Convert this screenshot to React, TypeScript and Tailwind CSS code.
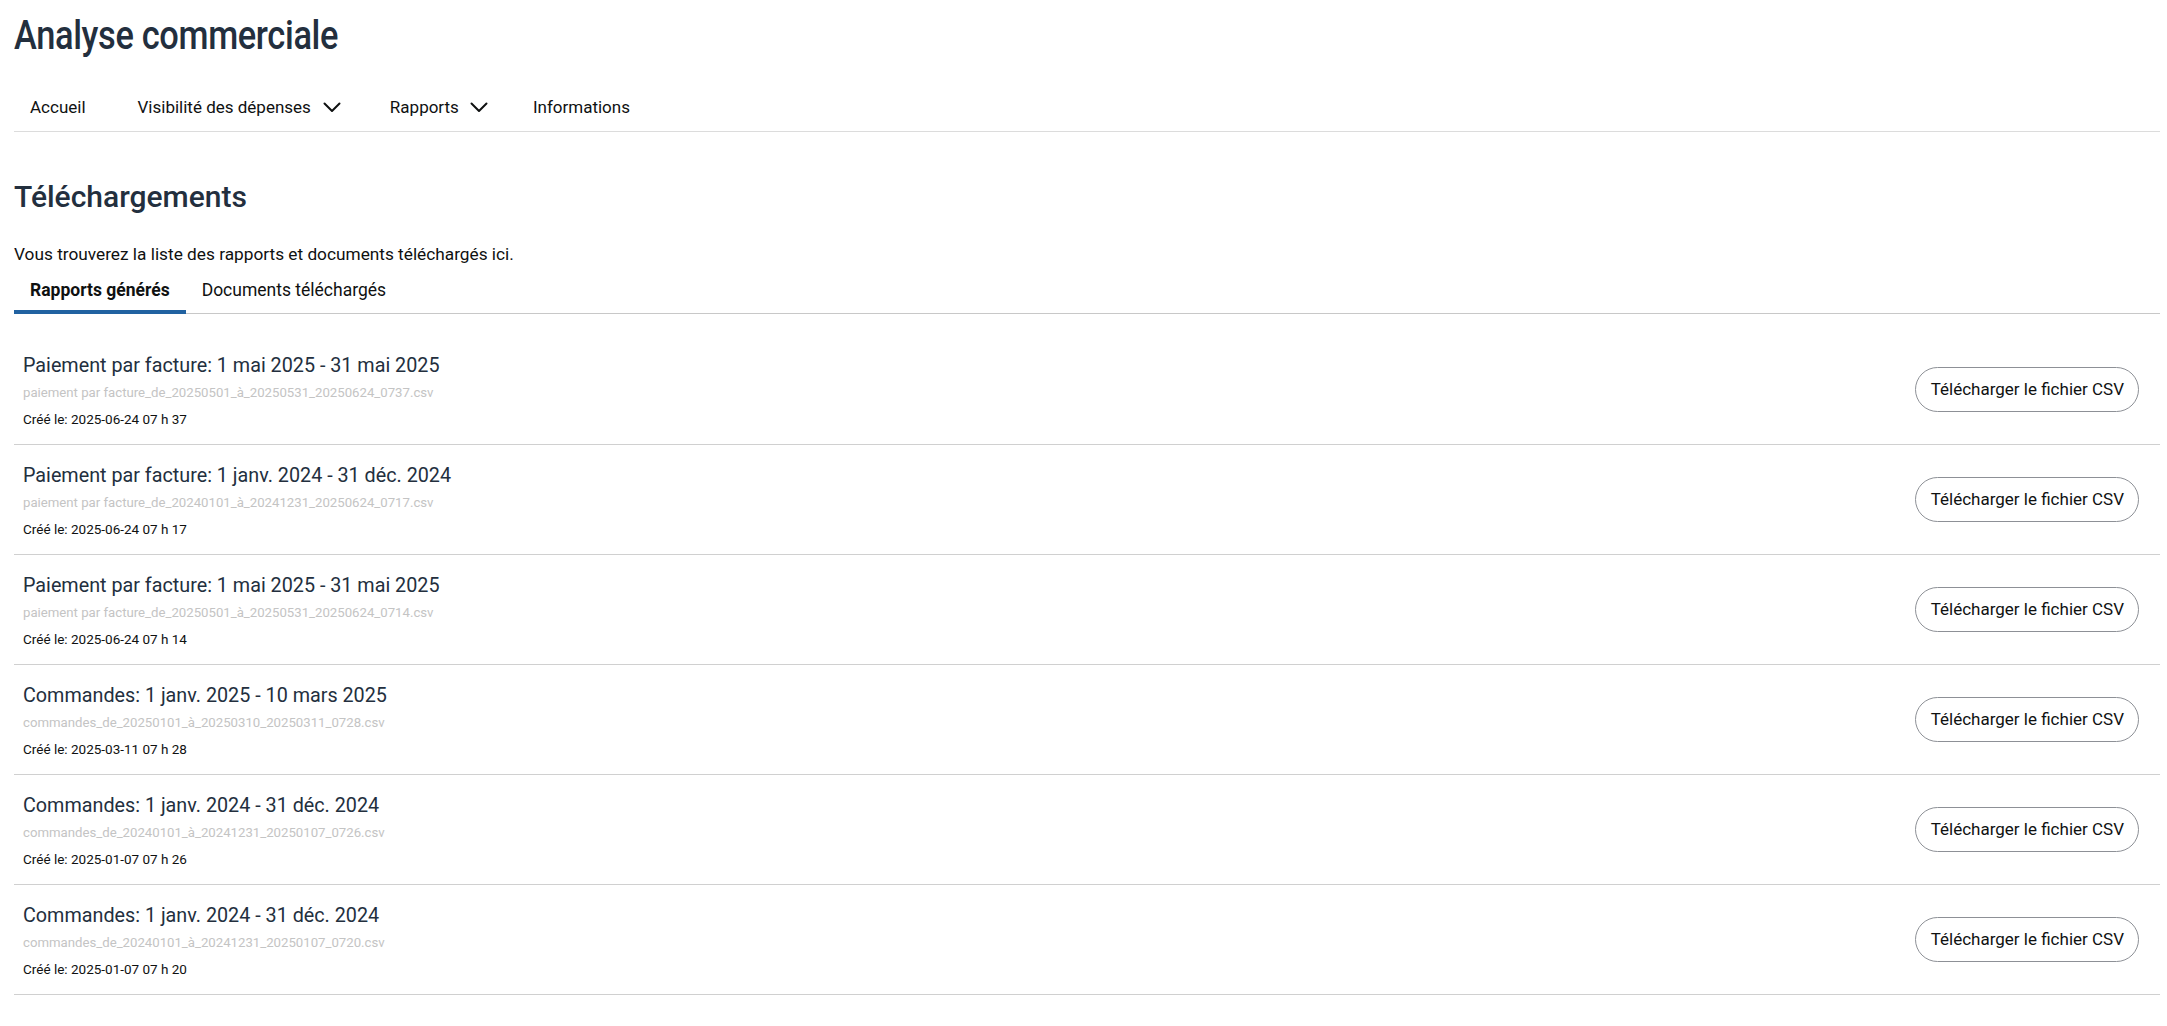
import React from 'react'

interface Report {
  title: string
  file: string
  created: string
}

const REPORTS: Report[] = [
  {
    title: 'Paiement par facture: 1 mai 2025 - 31 mai 2025',
    file: 'paiement par facture_de_20250501_à_20250531_20250624_0737.csv',
    created: '2025-06-24 07 h 37',
  },
  {
    title: 'Paiement par facture: 1 janv. 2024 - 31 déc. 2024',
    file: 'paiement par facture_de_20240101_à_20241231_20250624_0717.csv',
    created: '2025-06-24 07 h 17',
  },
  {
    title: 'Paiement par facture: 1 mai 2025 - 31 mai 2025',
    file: 'paiement par facture_de_20250501_à_20250531_20250624_0714.csv',
    created: '2025-06-24 07 h 14',
  },
  {
    title: 'Commandes: 1 janv. 2025 - 10 mars 2025',
    file: 'commandes_de_20250101_à_20250310_20250311_0728.csv',
    created: '2025-03-11 07 h 28',
  },
  {
    title: 'Commandes: 1 janv. 2024 - 31 déc. 2024',
    file: 'commandes_de_20240101_à_20241231_20250107_0726.csv',
    created: '2025-01-07 07 h 26',
  },
  {
    title: 'Commandes: 1 janv. 2024 - 31 déc. 2024',
    file: 'commandes_de_20240101_à_20241231_20250107_0720.csv',
    created: '2025-01-07 07 h 20',
  },
]

function Chevron() {
  return (
    <svg width="18" height="11" viewBox="0 0 18 11" fill="none" className="shrink-0">
      <polyline points="1.5,1.5 9,9 16.5,1.5" stroke="#0f1111" strokeWidth="2" strokeLinecap="round" strokeLinejoin="round" />
    </svg>
  )
}

export default function App() {
  return (
    <div className="min-h-screen bg-white font-['Roboto','Liberation_Sans',sans-serif] text-[#0f1111]">
      <div className="ml-[14px] mr-[7px]">
        {/* Header – condensed display face */}
        <h1 className="pt-[12px] origin-left scale-x-[0.86] text-[40px] leading-[48px] font-medium tracking-[-0.01em] text-[#232f3e]">
          Analyse commerciale
        </h1>

        {/* Nav */}
        <nav className="mt-[35px] flex items-center border-b border-[#dcdcdc] pb-[12px] pl-[16px] text-[17px] leading-[24px]">
          <span>Accueil</span>
          <span className="ml-[52px] flex items-center gap-[12px]">
            Visibilité des dépenses <Chevron />
          </span>
          <span className="ml-[49px] flex items-center gap-[11px]">
            Rapports <Chevron />
          </span>
          <span className="ml-[45px]">Informations</span>
        </nav>

        <h2 className="mt-[47px] text-[30px] leading-[36px] font-medium text-[#232f3e]">Téléchargements</h2>
        <p className="mt-[27px] text-[17.25px] leading-[24px]">
          Vous trouverez la liste des rapports et documents téléchargés ici.
        </p>

        {/* Tabs */}
        <div className="mt-[12px] flex border-b border-[#c8c8c8] text-[17.5px] leading-[24px]">
          <div className="-mb-px border-b-4 border-[#2162a1] px-[16px] pb-[8px] font-bold">Rapports générés</div>
          <div className="-mb-px border-b-4 border-transparent px-[16px] pb-[8px]">Documents téléchargés</div>
        </div>

        {/* Reports list */}
        <div className="mt-[21px]">
          {REPORTS.map((r, i) => (
            <div key={i} className="flex items-center justify-between border-b border-[#d0d0d0] pl-[9px] pr-[21px]">
              <div className="pt-[18px] pb-[16px]">
                <div className="text-[19.75px] leading-[26px] text-[#232f3e]">{r.title}</div>
                <div className="mt-[5px] text-[13.2px] leading-[18px] text-[#c4c4c4]">{r.file}</div>
                <div className="mt-[8px] text-[13.5px] leading-[18px] text-[#0f1111]">Créé le: {r.created}</div>
              </div>
              <button className="h-[45px] rounded-full border border-[#8d9096] bg-white pl-[15px] pr-[14px] text-[17px] text-[#0f1111]">
                Télécharger le fichier CSV
              </button>
            </div>
          ))}
        </div>
      </div>
    </div>
  )
}
